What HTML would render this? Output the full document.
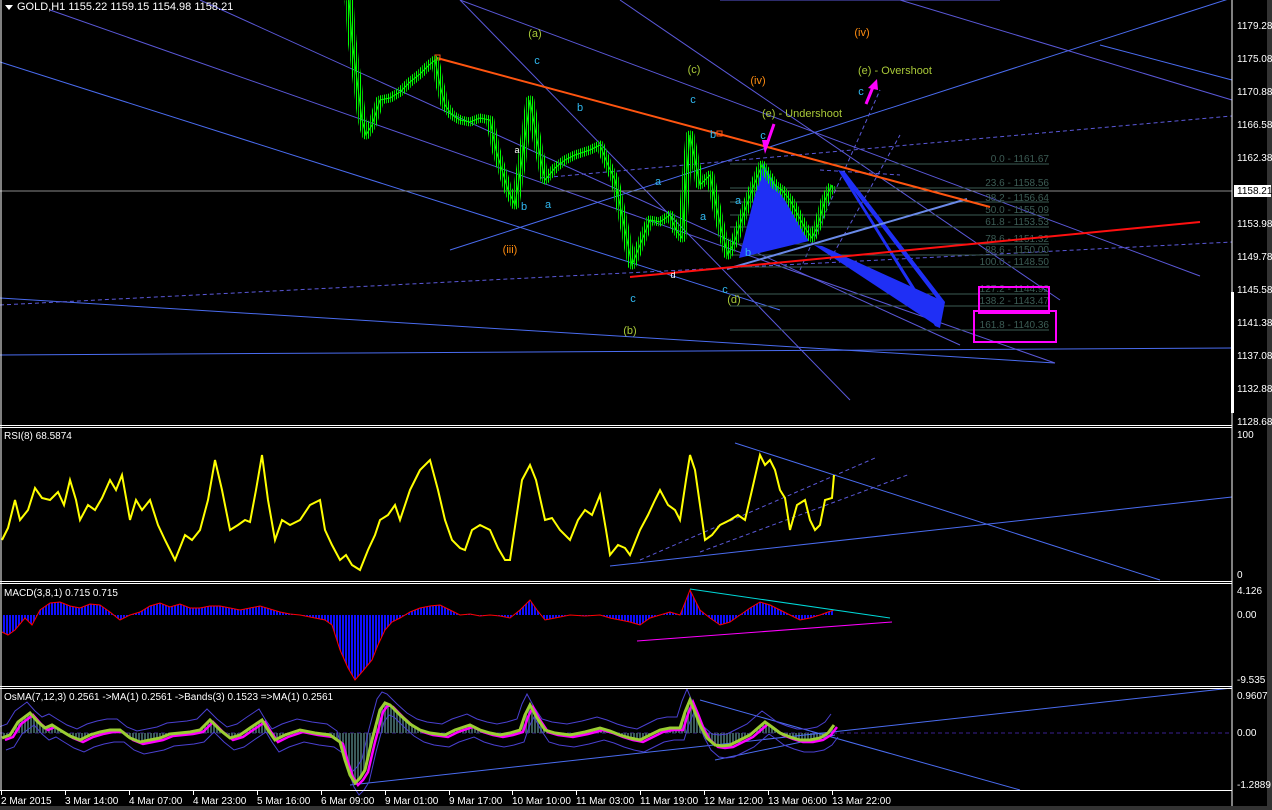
<!DOCTYPE html>
<html><head><meta charset="utf-8"><style>
html,body{margin:0;padding:0;background:#000;width:1272px;height:810px;overflow:hidden}
svg{display:block;font-family:"Liberation Sans",sans-serif}
</style></head><body>
<svg width="1272" height="810" viewBox="0 0 1272 810" xmlns="http://www.w3.org/2000/svg">
<defs>
<pattern id="cp" width="4" height="20" patternUnits="userSpaceOnUse"><rect x="0" y="0" width="1" height="20" fill="#00ff00"/><rect x="2" y="0" width="1" height="20" fill="#00c000"/></pattern>
<pattern id="bp" width="3" height="20" patternUnits="userSpaceOnUse"><rect x="0" y="0" width="2" height="20" fill="#1010ff"/></pattern>
<pattern id="gp" width="3" height="20" patternUnits="userSpaceOnUse"><rect x="0" y="0" width="2" height="20" fill="#3a5a5a"/></pattern>
<polyline id="op" fill="none" points="2,738 10,735 18,722 30,713 38,722 45,728 52,725 60,730 70,736 80,740 90,735 100,732 110,730 120,730 130,738 140,742 150,740 160,738 170,734 180,733 190,732 200,730 210,720 220,730 230,738 240,735 250,728 262,720 268,730 275,740 285,735 300,730 315,733 330,735 340,742 345,760 350,775 355,783 360,778 365,770 372,740 380,710 385,703 390,705 400,715 410,724 420,730 430,733 445,735 455,730 470,725 480,730 490,733 500,735 510,733 520,730 525,715 530,705 537,718 545,730 555,733 570,735 585,732 600,728 610,731 620,735 630,738 640,740 650,735 660,730 670,728 680,728 685,712 690,700 695,712 700,725 707,738 715,745 722,746 730,745 740,740 750,735 758,728 765,722 772,727 780,733 790,737 800,740 810,740 820,738 828,733 834,725"/>
<polyline id="pp" fill="none" points="349,0 352,40 357,80 362,120 366,135 372,125 380,100 390,98 400,92 410,82 420,74 428,66 435,60 440,85 445,105 452,115 460,120 470,122 480,118 490,120 496,150 502,170 508,190 515,205 522,160 530,100 537,140 545,180 555,168 565,160 575,155 590,150 600,145 608,165 615,180 622,215 632,265 640,245 650,220 660,222 670,215 676,230 682,238 686,180 690,135 695,160 700,185 710,175 716,205 722,232 728,255 735,240 745,210 752,190 762,165 768,175 775,185 782,190 790,200 798,215 805,228 812,238 818,225 825,200 832,185"/>
</defs>
<rect width="1272" height="810" fill="#000"/>
<g stroke="#4a6cf0" stroke-width="1" fill="none">
<line x1="0" y1="62" x2="780" y2="310"/>
<line x1="1100" y1="45" x2="1232" y2="80"/>
<line x1="0" y1="355" x2="1232" y2="348"/>
<line x1="0" y1="298" x2="1055" y2="363"/>
<line x1="50" y1="10" x2="1055" y2="363" stroke="#5a58d8"/>
<line x1="200" y1="0" x2="960" y2="345" stroke="#5a58d8"/>
<line x1="460" y1="0" x2="1200" y2="276" stroke="#5a58d8"/>
<line x1="460" y1="0" x2="850" y2="400" stroke="#5a58d8"/>
<line x1="450" y1="250" x2="1272" y2="-15"/>
<line x1="620" y1="0" x2="1060" y2="300" stroke="#5a58d8"/>
<line x1="900" y1="0" x2="1232" y2="100" stroke="#5a58d8"/>
<line x1="720" y1="0" x2="1000" y2="0" stroke="#5a58d8"/>
</g>
<g stroke="#5a58d8" stroke-width="1" fill="none" stroke-dasharray="4,3">
<line x1="0" y1="305" x2="1232" y2="242"/>
<line x1="540" y1="178" x2="1232" y2="116"/>
<line x1="800" y1="270" x2="880" y2="90"/>
<line x1="830" y1="260" x2="900" y2="135"/>
<line x1="820" y1="170" x2="900" y2="175"/>
</g>
<g stroke="#3c5c55" stroke-width="1">
<line x1="730" y1="164" x2="1049" y2="164"/><line x1="730" y1="188" x2="1049" y2="188"/><line x1="730" y1="202" x2="1049" y2="202"/><line x1="730" y1="215" x2="1049" y2="215"/><line x1="730" y1="227" x2="1049" y2="227"/><line x1="730" y1="244" x2="1049" y2="244"/><line x1="730" y1="255" x2="1049" y2="255"/><line x1="730" y1="267" x2="1049" y2="267"/><line x1="730" y1="294" x2="1049" y2="294"/><line x1="730" y1="306" x2="1049" y2="306"/><line x1="730" y1="330" x2="1049" y2="330"/>
</g>
<line x1="0" y1="191" x2="1232" y2="191" stroke="#8a8a8a"/>
<g fill="#3c5c55" font-size="10" text-anchor="end">
<text x="1049" y="162">0.0 - 1161.67</text><text x="1049" y="186">23.6 - 1158.56</text><text x="1049" y="201">38.2 - 1156.64</text><text x="1049" y="213">50.0 - 1155.09</text><text x="1049" y="225">61.8 - 1153.53</text><text x="1049" y="242">78.6 - 1151.32</text><text x="1049" y="253">88.6 - 1150.00</text><text x="1049" y="265">100.0 - 1148.50</text><text x="1049" y="292">127.2 - 1144.92</text><text x="1049" y="304">138.2 - 1143.47</text><text x="1049" y="328">161.8 - 1140.36</text>
</g>
<rect x="979" y="287" width="70" height="26" fill="none" stroke="#ff00ff" stroke-width="2"/>
<rect x="974" y="311" width="82" height="31" fill="none" stroke="#ff00ff" stroke-width="2"/>
<polygon points="763,163 739,258 809,241" fill="#1f2ff5"/>
<polygon points="838,170 845,172 945,302 941,304" fill="#1f2ff5"/>
<polygon points="838,170 843,173 940,328 935,326" fill="#1f2ff5"/>
<polygon points="814,245 822,246 945,302 940,328" fill="#1f2ff5"/>
<line x1="727" y1="269" x2="967" y2="199" stroke="#6a8ae8" stroke-width="2"/>
<line x1="630" y1="277" x2="1200" y2="222" stroke="#ff1010" stroke-width="2"/>
<line x1="437" y1="58" x2="990" y2="207" stroke="#ff5510" stroke-width="2"/>
<rect x="435" y="55" width="5" height="5" fill="none" stroke="#ff5510"/>
<rect x="717" y="131" width="5" height="5" fill="none" stroke="#ff5510"/>
<use href="#pp" stroke="url(#cp)" stroke-width="9" stroke-linejoin="round"/>
<use href="#pp" stroke="#00ff00" stroke-width="1"/>
<g stroke="#ff00ff" stroke-width="3" fill="#ff00ff">
<line x1="774" y1="124" x2="767" y2="144"/><polygon points="762,140 770,140 765,154" stroke="none"/>
<line x1="866" y1="104" x2="873" y2="87"/><polygon points="868,88 878,90 877,79" stroke="none"/>
</g>
<g font-size="11" text-anchor="middle">
<g fill="#a8c838"><text x="535" y="37">(a)</text><text x="694" y="73">(c)</text><text x="630" y="334">(b)</text><text x="734" y="303">(d)</text><text x="802" y="117">(e) - Undershoot</text><text x="895" y="74">(e) - Overshoot</text></g>
<g fill="#ff8c10"><text x="862" y="36">(iv)</text><text x="758" y="84">(iv)</text><text x="510" y="253">(iii)</text></g>
<g fill="#30b8f0"><text x="537" y="64">c</text><text x="580" y="111">b</text><text x="693" y="103">c</text><text x="713" y="138">b</text><text x="763" y="139">c</text><text x="861" y="95">c</text><text x="633" y="302">c</text><text x="725" y="293">c</text><text x="703" y="220">a</text><text x="738" y="204">a</text><text x="748" y="256">b</text><text x="548" y="208">a</text><text x="524" y="210">b</text><text x="658" y="185">a</text></g>
<g fill="#ffffff" font-size="9"><text x="517" y="153">a</text><text x="673" y="278">d</text></g>
</g>
<polygon points="5,5 13,5 9,10" fill="#fff"/>
<text x="17" y="10" fill="#fff" font-size="11">GOLD,H1  1155.22 1159.15 1154.98 1158.21</text>
<!-- RSI -->
<g stroke="#4a6cf0" fill="none">
<line x1="610" y1="566" x2="1232" y2="497"/>
<line x1="735" y1="443" x2="1160" y2="580"/>
<line x1="640" y1="560" x2="875" y2="458" stroke-dasharray="4,3" stroke="#5a58d8"/>
<line x1="700" y1="552" x2="910" y2="474" stroke-dasharray="4,3" stroke="#5a58d8"/>
</g>
<polyline fill="none" stroke="#ffff00" stroke-width="2" points="2,540 8,528 15,500 20,520 28,510 35,488 42,498 50,500 58,492 64,505 70,480 76,500 80,520 88,505 95,510 102,498 110,480 116,490 122,475 130,520 136,500 142,510 150,500 158,525 165,540 175,560 185,535 192,540 200,530 208,500 215,460 222,490 230,530 238,525 245,520 250,522 256,490 262,455 268,500 275,540 282,520 290,525 300,520 310,505 320,500 325,530 332,545 340,560 346,555 352,565 360,570 368,550 375,535 380,520 388,515 395,505 400,520 410,490 420,470 430,460 438,490 445,520 452,540 460,548 465,550 472,530 480,525 490,530 498,548 505,560 510,560 516,520 522,480 530,465 536,480 545,520 552,518 560,530 570,540 578,520 585,510 592,515 600,495 606,530 610,555 618,545 625,548 630,555 640,530 648,515 655,500 660,490 668,505 675,510 680,520 686,480 690,455 695,470 700,505 705,540 712,535 720,525 730,520 738,515 745,520 752,490 760,455 765,465 770,460 775,470 780,490 785,498 790,530 797,505 805,500 810,520 815,530 820,525 825,500 832,498 834,475"/>
<text x="4" y="439" fill="#fff" font-size="10">RSI(8) 68.5874</text>
<!-- MACD -->
<polygon fill="url(#bp)" points="2,615 2,632 8,635 15,630 25,618 32,625 40,610 50,603 60,602 70,606 80,608 90,604 100,605 110,612 120,620 130,615 140,612 150,606 160,603 170,607 180,604 190,608 200,608 210,606 220,606 230,608 240,610 250,608 260,606 270,609 280,612 290,614 300,615 310,617 325,620 332,625 340,650 348,668 355,680 362,672 372,660 378,645 385,630 392,622 400,618 410,612 420,608 430,606 440,605 450,610 460,615 470,614 480,616 490,615 500,616 510,618 520,610 530,600 537,610 545,620 555,618 570,615 585,616 600,615 610,618 620,620 630,622 640,625 650,618 660,615 670,612 680,615 686,600 690,590 695,600 700,610 710,618 720,625 730,622 740,615 750,608 760,602 770,605 780,610 790,615 800,620 810,618 820,615 828,612 834,610 834,615"/>
<polyline fill="none" stroke="#ff0000" points="2,632 8,635 15,630 25,618 32,625 40,610 50,603 60,602 70,606 80,608 90,604 100,605 110,612 120,620 130,615 140,612 150,606 160,603 170,607 180,604 190,608 200,608 210,606 220,606 230,608 240,610 250,608 260,606 270,609 280,612 290,614 300,615 310,617 325,620 332,625 340,650 348,668 355,680 362,672 372,660 378,645 385,630 392,622 400,618 410,612 420,608 430,606 440,605 450,610 460,615 470,614 480,616 490,615 500,616 510,618 520,610 530,600 537,610 545,620 555,618 570,615 585,616 600,615 610,618 620,620 630,622 640,625 650,618 660,615 670,612 680,615 686,600 690,590 695,600 700,610 710,618 720,625 730,622 740,615 750,608 760,602 770,605 780,610 790,615 800,620 810,618 820,615 828,612 834,610"/>
<line x1="690" y1="589" x2="890" y2="618" stroke="#00d8d8"/>
<line x1="637" y1="641" x2="892" y2="622" stroke="#ff00ff"/>
<text x="4" y="596" fill="#fff" font-size="10">MACD(3,8,1) 0.715 0.715</text>
<!-- OsMA -->
<line x1="0" y1="733" x2="1232" y2="733" stroke="#3a2090" stroke-dasharray="4,3"/>
<polygon fill="url(#gp)" points="2,733 2,738 10,735 18,722 30,713 38,722 45,728 52,725 60,730 70,736 80,740 90,735 100,732 110,730 120,730 130,738 140,742 150,740 160,738 170,734 180,733 190,732 200,730 210,720 220,730 230,738 240,735 250,728 262,720 268,730 275,740 285,735 300,730 315,733 330,735 340,742 345,760 350,775 355,783 360,778 365,770 372,740 380,710 385,703 390,705 400,715 410,724 420,730 430,733 445,735 455,730 470,725 480,730 490,733 500,735 510,733 520,730 525,715 530,705 537,718 545,730 555,733 570,735 585,732 600,728 610,731 620,735 630,738 640,740 650,735 660,730 670,728 680,728 685,712 690,700 695,712 700,725 707,738 715,745 722,746 730,745 740,740 750,735 758,728 765,722 772,727 780,733 790,737 800,740 810,740 820,738 828,733 834,725 834,733"/>
<g stroke="#4a6cf0" fill="none">
<line x1="350" y1="785" x2="1232" y2="688"/>
<line x1="700" y1="700" x2="1020" y2="790"/>
<line x1="715" y1="760" x2="835" y2="735"/>
</g>
<use href="#op" transform="translate(-3,-11)" stroke="#4a40d0" stroke-width="1"/>
<use href="#op" transform="translate(4,12)" stroke="#4a40d0" stroke-width="1"/>
<use href="#op" transform="translate(3,2)" stroke="#ff00ff" stroke-width="2.5"/>
<use href="#op" stroke="#9acd32" stroke-width="3"/>
<text x="4" y="700" fill="#fff" font-size="10">OsMA(7,12,3) 0.2561  -&gt;MA(1) 0.2561  -&gt;Bands(3) 0.1523  =&gt;MA(1) 0.2561</text>
<g stroke="#fff" fill="none">
<line x1="1232" y1="0" x2="1232" y2="810"/>
<line x1="1" y1="0" x2="1" y2="791"/>
<line x1="0" y1="425.5" x2="1232" y2="425.5"/><line x1="0" y1="427.5" x2="1232" y2="427.5"/>
<line x1="0" y1="581.5" x2="1232" y2="581.5"/><line x1="0" y1="583.5" x2="1232" y2="583.5"/>
<line x1="0" y1="686.5" x2="1232" y2="686.5"/><line x1="0" y1="688.5" x2="1232" y2="688.5"/>
<line x1="0" y1="790.5" x2="1232" y2="790.5"/>
</g>
<rect x="1231" y="292" width="3" height="121" fill="#fff"/>
<rect x="1267" y="0" width="5" height="810" fill="#333"/>
<rect x="0" y="806" width="1272" height="4" fill="#333"/>
<rect x="1234" y="185" width="37" height="12" fill="#fff"/>
<g fill="#fff" font-size="10">
<text x="1237" y="29">1179.28</text><text x="1237" y="62">1175.08</text><text x="1237" y="95">1170.88</text><text x="1237" y="128">1166.58</text><text x="1237" y="161">1162.38</text>
<text x="1237" y="194" fill="#000">1158.21</text>
<text x="1237" y="227">1153.98</text><text x="1237" y="260">1149.78</text><text x="1237" y="293">1145.58</text><text x="1237" y="326">1141.38</text><text x="1237" y="359">1137.08</text><text x="1237" y="392">1132.88</text><text x="1237" y="425">1128.68</text>
<text x="1237" y="438">100</text><text x="1237" y="578">0</text>
<text x="1237" y="594">4.126</text><text x="1237" y="618">0.00</text><text x="1237" y="683">-9.535</text>
<text x="1237" y="699">0.9607</text><text x="1237" y="736">0.00</text><text x="1237" y="788">-1.2889</text>
</g>
<g fill="#fff" font-size="10">
<text x="1" y="804">2 Mar 2015</text><text x="65" y="804">3 Mar 14:00</text><text x="129" y="804">4 Mar 07:00</text><text x="193" y="804">4 Mar 23:00</text><text x="257" y="804">5 Mar 16:00</text><text x="321" y="804">6 Mar 09:00</text><text x="385" y="804">9 Mar 01:00</text><text x="449" y="804">9 Mar 17:00</text><text x="512" y="804">10 Mar 10:00</text><text x="576" y="804">11 Mar 03:00</text><text x="640" y="804">11 Mar 19:00</text><text x="704" y="804">12 Mar 12:00</text><text x="768" y="804">13 Mar 06:00</text><text x="832" y="804">13 Mar 22:00</text>
</g>
<g fill="#fff"><rect x="1" y="791" width="1" height="4"/><rect x="65" y="791" width="1" height="4"/><rect x="129" y="791" width="1" height="4"/><rect x="193" y="791" width="1" height="4"/><rect x="257" y="791" width="1" height="4"/><rect x="321" y="791" width="1" height="4"/><rect x="385" y="791" width="1" height="4"/><rect x="449" y="791" width="1" height="4"/><rect x="512" y="791" width="1" height="4"/><rect x="576" y="791" width="1" height="4"/><rect x="640" y="791" width="1" height="4"/><rect x="704" y="791" width="1" height="4"/><rect x="768" y="791" width="1" height="4"/><rect x="832" y="791" width="1" height="4"/></g>
</svg>
</body></html>
